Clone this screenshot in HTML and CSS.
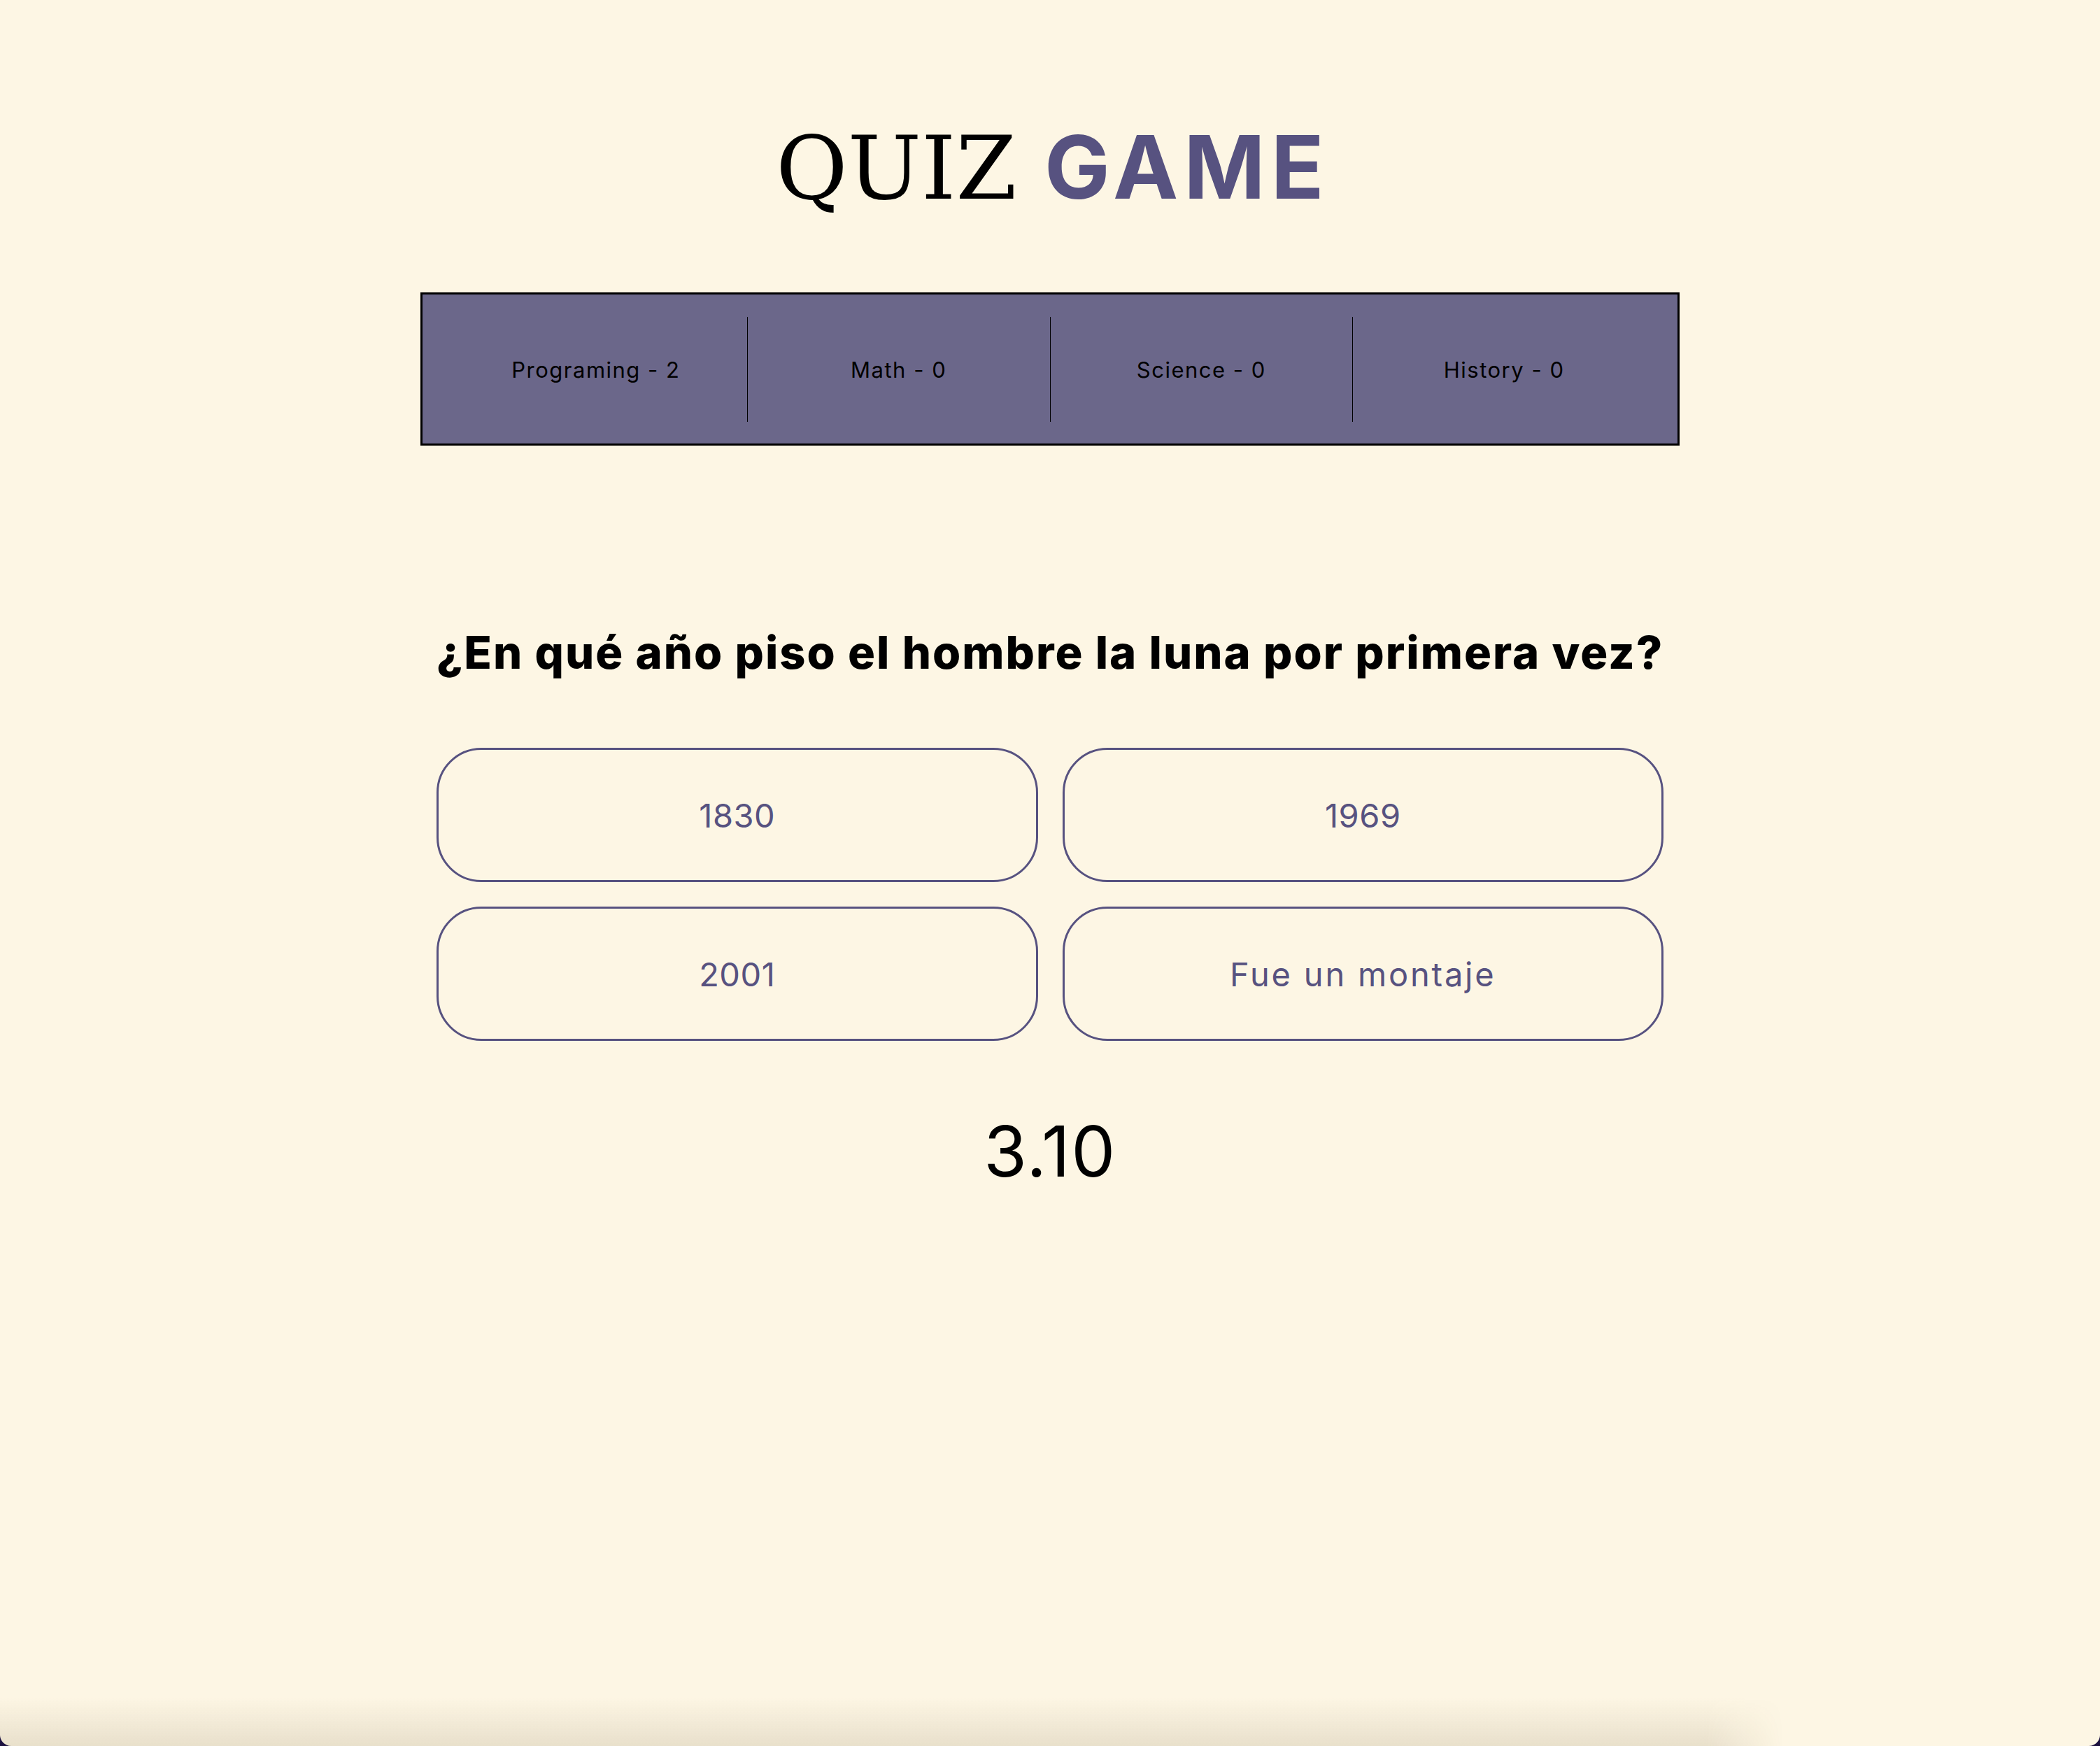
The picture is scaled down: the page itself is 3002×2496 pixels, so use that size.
FILE: index.html
```
<!DOCTYPE html>
<html lang="es">
<head>
<meta charset="utf-8">
<title>Quiz Game</title>
<link rel="stylesheet" href="styles.css">
</head>
<body>
<main class="page">
  <h1 class="title"><span class="title-quiz">QUIZ</span> <span class="title-game">GAME</span></h1>

  <section class="scores">
    <div class="score">Programing - 2</div>
    <div class="score">Math - 0</div>
    <div class="score">Science - 0</div>
    <div class="score">History - 0</div>
  </section>

  <h2 class="question">¿En qué año piso el hombre la luna por primera vez?</h2>

  <div class="answers">
    <button class="answer">1830</button>
    <button class="answer">1969</button>
    <button class="answer">2001</button>
    <button class="answer answer-text">Fue un montaje</button>
  </div>

  <p class="timer">3.10</p>
</main>
<div class="window-shade"></div>
<div class="window-frame"></div>
</body>
</html>
```

FILE: styles.css
```
html, body {
  margin: 0;
  padding: 0;
}

body {
  background: #fdf6e4;
  font-family: "Inter", "DejaVu Sans", sans-serif;
  color: #000;
  min-height: 2496px;
}

.page {
  width: 1800px;
  margin: 0 auto;
  display: flex;
  flex-direction: column;
}

.title {
  margin: 164px 0 102px;
  font-family: "DejaVu Serif", serif;
  font-weight: normal;
  font-size: 125px;
  line-height: 150px;
  text-align: center;
  white-space: nowrap;
}

.title-quiz {
  font-family: "DejaVu Serif", serif;
  font-weight: normal;
  color: #000;
}

.title-game {
  font-family: "Inter", sans-serif;
  font-weight: 700;
  color: #575280;
  letter-spacing: 8px;
  margin-right: -8px;
}

.scores {
  display: flex;
  box-sizing: border-box;
  height: 219px;
  padding: 32px 32px 31px;
  border: 3px solid #000;
  background: #6b678a;
}

.score {
  flex: 1;
  display: flex;
  align-items: center;
  justify-content: center;
  font-size: 31px;
  letter-spacing: 1.5px;
  color: #000;
}

.score + .score {
  border-left: 1px solid #000;
}

.question {
  margin: 256px 0 96px;
  font-size: 65px;
  line-height: 80px;
  font-weight: 800;
  letter-spacing: 2px;
  text-align: center;
  white-space: nowrap;
}

.answers {
  display: grid;
  grid-template-columns: 1fr 1fr;
  gap: 35px;
  margin: 0 23px;
}

.answer {
  height: 192px;
  border: 3px solid #575280;
  border-radius: 64px;
  background: transparent;
  color: #575280;
  font-family: "Inter", "DejaVu Sans", sans-serif;
  font-size: 47px;
  font-weight: 400;
  letter-spacing: 0.5px;
  padding: 0;
}

.answer-text {
  letter-spacing: 2.8px;
}

.timer {
  margin: 98px 0 0;
  font-size: 100px;
  line-height: 120px;
  letter-spacing: 1.5px;
  text-align: center;
}

.window-shade {
  position: fixed;
  left: 0;
  bottom: 0;
  width: 2560px;
  height: 70px;
  pointer-events: none;
  background: linear-gradient(to bottom, rgba(70, 50, 10, 0), rgba(70, 50, 10, 0.11));
  -webkit-mask-image: linear-gradient(to right, #000 2440px, transparent 2550px);
  mask-image: linear-gradient(to right, #000 2440px, transparent 2550px);
}

.window-frame {
  position: fixed;
  inset: 0;
  pointer-events: none;
  border-radius: 0 0 16px 16px;
  box-shadow: 0 0 0 60px #1c1140;
}
```
